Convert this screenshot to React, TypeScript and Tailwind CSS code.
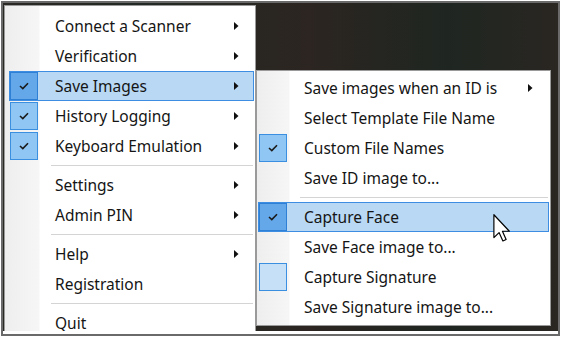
import React from "react";

type Item =
  | { sep: true }
  | { label: string; sub?: boolean; check?: "on" | "off"; active?: boolean };

const mainItems: Item[] = [
  { label: "Connect a Scanner", sub: true },
  { label: "Verification", sub: true },
  { label: "Save Images", sub: true, check: "on", active: true },
  { label: "History Logging", sub: true, check: "on" },
  { label: "Keyboard Emulation", sub: true, check: "on" },
  { sep: true },
  { label: "Settings", sub: true },
  { label: "Admin PIN", sub: true },
  { sep: true },
  { label: "Help", sub: true },
  { label: "Registration" },
  { sep: true },
  { label: "Quit" },
];

const subItems: Item[] = [
  { label: "Save images when an ID is", sub: true },
  { label: "Select Template File Name" },
  { label: "Custom File Names", check: "on" },
  { label: "Save ID image to..." },
  { sep: true },
  { label: "Capture Face", check: "on", active: true },
  { label: "Save Face image to..." },
  { label: "Capture Signature", check: "off" },
  { label: "Save Signature image to..." },
];

function Check() {
  return (
    <svg width="10" height="8" viewBox="0 0 10 8">
      <path d="M1 4 L3.8 6.6 L9 1.2" fill="none" stroke="#1a1a1a" strokeWidth="1.6" />
    </svg>
  );
}

function Arrow() {
  return (
    <svg width="5" height="8" viewBox="0 0 5 8">
      <polygon points="0,0 4.5,4 0,8" fill="#111" />
    </svg>
  );
}

function Row({ item, arrowPad }: { item: Item; arrowPad: string }) {
  if ("sep" in item) {
    return (
      <div className="h-[9px] flex items-center pl-[42px] pr-[1px]">
        <div className="h-px w-full bg-[#d4d4d4]" />
      </div>
    );
  }
  const box =
    item.check === undefined
      ? "border-transparent"
      : item.active
        ? "bg-[#64a8ea] border-[#2e7fd6]"
        : item.check === "on"
          ? "bg-[#90c6f3] border-[#3b8fe0]"
          : "bg-[#c6e1f7] border-[#3b8fe0]";
  return (
    <div
      className={`h-[30px] flex items-center border ${
        item.active ? "bg-[#b8d8f4] border-[#3d8ee2]" : "border-transparent"
      }`}
    >
      <div className={`w-[28px] h-[28px] -my-px border flex items-center justify-center ${box}`}>
        {item.check === "on" && <Check />}
      </div>
      <span className="ml-[17px] flex-1 text-[15.5px] leading-[20px] text-[#151515] whitespace-nowrap">
        {item.label}
      </span>
      {item.sub && (
        <span className={`flex items-center ${arrowPad}`}>
          <Arrow />
        </span>
      )}
    </div>
  );
}

export default function App() {
  return (
    <div className="w-[561px] h-[339px] bg-white pt-[1px] px-[1px] pb-[3px] font-['Noto_Sans',sans-serif]">
      <div className="h-full border-2 border-[#6a6a6a] flex flex-col">
        <div className="relative flex-1 overflow-hidden bg-[linear-gradient(90deg,#2a2824_0%,#232a25_25%,#2c2521_55%,#1f2621_80%,#2a2622_100%)]">
          {/* main menu */}
          <div className="ml-[1px] mt-[2px] w-[252px] h-[340px] border border-[#9a9a9a] bg-[linear-gradient(to_right,#eeeeee_0px,#f6f6f6_34px,#ffffff_35px)] pt-[5px] pl-[4px] pr-[1px]">
            {mainItems.map((it, i) => (
              <Row key={i} item={it} arrowPad="pr-[14px]" />
            ))}
          </div>

          {/* submenu */}
          <div className="absolute left-[253px] top-[67px] w-[295px] border border-[#9a9a9a] bg-[linear-gradient(to_right,#eeeeee_0px,#f6f6f6_32px,#ffffff_33px)] pt-[2px] pb-[3px] px-[1px]">
            {subItems.map((it, i) => (
              <Row key={i} item={it} arrowPad="pr-[15px]" />
            ))}
          </div>

          {/* cursor */}
          <svg
            className="absolute left-[490px] top-[211px]"
            width="18"
            height="28"
            viewBox="0 0 12 19"
          >
            <polygon
              points="0.5,0.5 0.5,16 4,12.6 6.6,18.3 8.8,17.3 6.3,11.7 11,11.7"
              fill="#fff"
              stroke="#000"
              strokeWidth="0.8"
              strokeLinejoin="round"
            />
          </svg>
        </div>
        <div className="h-[3px] bg-white" />
      </div>
    </div>
  );
}
